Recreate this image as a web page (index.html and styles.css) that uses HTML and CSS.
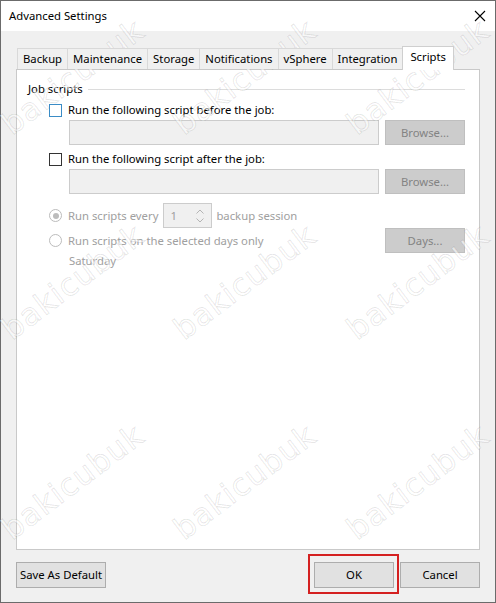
FILE: index.html
```html
<!DOCTYPE html>
<html>
<head>
<meta charset="utf-8">
<link rel="stylesheet" href="styles.css">
</head>
<body>
<div class="window">
  <div class="titlebar">
    <span class="title">Advanced Settings</span>
    <span class="close"><svg width="12" height="12" viewBox="0 0 12 12"><path d="M1 1L11 11M11 1L1 11" stroke="#000" stroke-width="1.1" fill="none"/></svg></span>
  </div>
  <div class="main">
    <div class="tabs">
      <div class="tab">Backup</div>
      <div class="tab">Maintenance</div>
      <div class="tab">Storage</div>
      <div class="tab">Notifications</div>
      <div class="tab">vSphere</div>
      <div class="tab">Integration</div>
      <div class="tab active">Scripts</div>
    </div>
    <div class="panel">
      <div class="group-head"><span class="group-label">Job scripts</span><span class="group-line"></span></div>
      <div class="rows">
        <div class="row check-row first-row"><span class="checkbox focus"></span><span class="label">Run the following script before the job:</span></div>
        <div class="row field-row"><span class="field"></span><span class="btn disabled">Browse...</span></div>
        <div class="row check-row second-row"><span class="checkbox"></span><span class="label">Run the following script after the job:</span></div>
        <div class="row field-row"><span class="field"></span><span class="btn disabled">Browse...</span></div>
        <div class="row radio-row spin-row">
          <span class="radio checked"></span><span class="label dim">Run scripts every</span>
          <span class="spinner"><span class="spin-val">1</span><svg class="spin-arrows" width="10" height="16" viewBox="0 0 10 16"><path d="M1.5 5.5L5 2L8.5 5.5M1.5 10.5L5 14L8.5 10.5" stroke="#b4b4b4" stroke-width="1" fill="none"/></svg></span>
          <span class="label dim">backup session</span>
        </div>
        <div class="row radio-row days-row">
          <span class="radio"></span><span class="label dim">Run scripts on the selected days only</span>
          <span class="spacer"></span><span class="btn disabled">Days...</span>
        </div>
        <div class="row sub-row"><span class="label dim">Saturday</span></div>
      </div>
    </div>
    <div class="footer">
      <span class="btn wide">Save As Default</span>
      <span class="spacer"></span>
      <span class="btn highlight">OK</span>
      <span class="btn">Cancel</span>
    </div>
  </div>
</div>
<div class="watermarks">
  <span class="wm wm-a1">bakicubuk</span>
  <span class="wm wm-a2">bakicubuk</span>
  <span class="wm wm-a3">bakicubuk</span>
  <span class="wm wm-b1">bakicubuk</span>
  <span class="wm wm-b2">bakicubuk</span>
  <span class="wm wm-b3">bakicubuk</span>
  <span class="wm wm-c1">bakicubuk</span>
  <span class="wm wm-c2">bakicubuk</span>
  <span class="wm wm-c3">bakicubuk</span>
</div>
</body>
</html>
```
FILE: styles.css
```css
* { box-sizing: border-box; }
html, body { margin: 0; padding: 0; }
body {
  width: 496px;
  height: 603px;
  position: relative;
  overflow: hidden;
  background: #fff;
  font-family: "Noto Sans", "Open Sans", sans-serif;
  font-size: 11.3px;
  color: #000;
}
.window {
  width: 496px;
  height: 603px;
  border: 1px solid #6b6b6b;
  background: #f0f0f0;
  display: flex;
  flex-direction: column;
}
.titlebar {
  flex: none;
  height: 30px;
  background: #fff;
  display: flex;
  align-items: center;
  justify-content: space-between;
  padding-left: 8px;
}
.title { line-height: 16px; }
.close {
  width: 30px;
  height: 30px;
  display: flex;
  align-items: center;
  justify-content: center;
}
.main {
  flex: 1;
  display: flex;
  flex-direction: column;
  padding: 15px 15px 14px 15px;
}
.tabs {
  flex: none;
  height: 24px;
  display: flex;
  align-items: flex-end;
  padding-left: 1px;
  margin-bottom: -1px;
  position: relative;
  z-index: 1;
}
.tab {
  height: 21px;
  margin-bottom: 1px;
  padding: 0 5px;
  line-height: 20px;
  border: 1px solid #d9d9d9;
  border-bottom: none;
  margin-right: -1px;
  background: #f0f0f0;
  white-space: nowrap;
}
.tab.active {
  height: 24px;
  margin-bottom: 0;
  background: #fff;
  line-height: 20px;
  padding: 0 7px;
  border-color: #cfcfcf;
}
.panel {
  flex: 1;
  background: #fff;
  border: 1px solid #c9c9c9;
  padding: 11px 14px 0 11px;
  display: flex;
  flex-direction: column;
}
.group-head {
  display: flex;
  align-items: center;
  height: 16px;
}
.group-label { line-height: 16px; padding-right: 5px; }
.group-line { flex: 1; border-top: 1px solid #dcdcdc; margin-top: 1px; }
.rows {
  padding-left: 21px;
  display: flex;
  flex-direction: column;
}
.row { display: flex; align-items: center; }
.check-row, .radio-row { height: 16px; }
.first-row { margin-top: 5px; }
.second-row { margin-top: 6px; }
.field-row { height: 25px; margin-top: 2px; padding-left: 20px; gap: 6px; }
.spin-row { height: 25px; margin-top: 9px; }
.days-row { height: 25px; margin-top: 0; }
.sub-row { height: 16px; padding-left: 20px; }
.checkbox {
  width: 13px;
  height: 13px;
  border: 1px solid #333;
  background: #fff;
  flex: none;
}
.checkbox.focus { border-color: #3a8cc6; }
.radio {
  width: 13px;
  height: 13px;
  border: 1px solid #bcbcbc;
  border-radius: 50%;
  background: #fff;
  flex: none;
  display: flex;
  align-items: center;
  justify-content: center;
}
.radio.checked::after {
  content: "";
  width: 6px;
  height: 6px;
  border-radius: 50%;
  background: #bcbcbc;
}
.label { padding-left: 6px; line-height: 16px; white-space: nowrap; }
.sub-row .label { padding-left: 0; }
.dim { color: #a0a0a0; }
.field {
  width: 310px;
  height: 25px;
  background: #f0f0f0;
  border: 1px solid #cccccc;
}
.btn {
  width: 80px;
  height: 25px;
  border: 1px solid #adadad;
  background: #e1e1e1;
  display: flex;
  align-items: center;
  justify-content: center;
  line-height: 16px;
  flex: none;
}
.btn.disabled {
  background: #cccccc;
  border-color: #bfbfbf;
  color: #838383;
}
.spacer { flex: 1; }
.spinner {
  width: 49px;
  height: 25px;
  margin-left: 5px;
  border: 1px solid #cccccc;
  background: #f0f0f0;
  display: flex;
  align-items: center;
  justify-content: space-between;
  padding: 0 6px 0 6px;
  color: #a0a0a0;
}
.spinner + .label { padding-left: 4px; }
.footer {
  flex: none;
  display: flex;
  gap: 6px;
  margin-top: 12px;
  height: 26px;
}
.footer .btn { height: 26px; }
.btn.wide { width: 90px; }
.btn.highlight { position: relative; }
.btn.highlight::after {
  content: "";
  position: absolute;
  top: -9px;
  left: -7px;
  right: -6px;
  bottom: -7px;
  border: 2px solid #d42020;
}
.watermarks {
  position: absolute;
  inset: 0;
  pointer-events: none;
}
.wm {
  position: absolute;
  font-family: "DejaVu Sans", sans-serif;
  font-size: 31px;
  line-height: 31px;
  letter-spacing: 1px;
  color: rgba(255, 255, 255, 0.55);
  -webkit-text-stroke: 1px rgba(0, 0, 0, 0.1);
  transform-origin: 0 100%;
  transform: rotate(-37deg);
  white-space: nowrap;
}
.wm-a1 { left: 15px; top: 109px; }
.wm-a2 { left: 187px; top: 109px; }
.wm-a3 { left: 360px; top: 109px; }
.wm-b1 { left: 15px; top: 314px; }
.wm-b2 { left: 187px; top: 314px; }
.wm-b3 { left: 360px; top: 314px; }
.wm-c1 { left: 15px; top: 514px; }
.wm-c2 { left: 187px; top: 514px; }
.wm-c3 { left: 360px; top: 514px; }
```
